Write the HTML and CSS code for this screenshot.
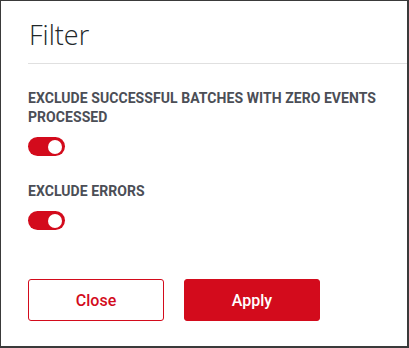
FILE: index.html
```html
<!DOCTYPE html>
<html>

<head>
    <meta charset="utf-8">
    <title>Filter</title>
    <link rel="stylesheet" href="styles.css">
</head>

<body>
    <div class="dialog">
        <header class="dialog-header">
            <h2 class="dialog-title">Filter</h2>
        </header>
        <div class="dialog-body">
            <div class="option">
                <label class="option-label">EXCLUDE SUCCESSFUL BATCHES WITH ZERO EVENTS PROCESSED</label>
                <span class="toggle"><span class="toggle-knob"></span></span>
            </div>
            <div class="option">
                <label class="option-label">EXCLUDE ERRORS</label>
                <span class="toggle"><span class="toggle-knob"></span></span>
            </div>
        </div>
        <footer class="dialog-footer">
            <button class="btn btn-secondary">Close</button>
            <button class="btn btn-primary">Apply</button>
        </footer>
    </div>
</body>

</html>
```

FILE: styles.css
```css
* {
    box-sizing: border-box;
    --red: #d30b1c;
    --text: #21272a;
    --label: #4b4e56;
    --line: #e0e0e0;
}

body {
    margin: 0;
    font-family: 'Roboto', sans-serif;
    background: #fff;
}

.dialog {
    width: 409px;
    height: 348px;
    border: 1px solid #3a3a3a;
    border-right-width: 2px;
    border-bottom-width: 2px;
    padding-left: 27px;
    display: flex;
    flex-direction: column;
}

.dialog-header {
    border-bottom: 1px solid var(--line);
    padding-top: 17px;
    height: 63px;
}

.dialog-title {
    margin: 0;
    font-family: 'Open Sans', sans-serif;
    font-size: 27px;
    font-weight: 300;
    line-height: 34px;
    color: var(--text);
    padding-left: 1px;
}

.dialog-body {
    padding-top: 25px;
    padding-right: 10px;
}

.option {
    display: flex;
    flex-direction: column;
    align-items: flex-start;
    margin-bottom: 26px;
}

.option-label {
    font-size: 14px;
    font-weight: 700;
    line-height: 19px;
    letter-spacing: 0.06px;
    color: var(--label);
    margin-bottom: 10px;
}

.toggle {
    width: 37px;
    height: 19px;
    border-radius: 10px;
    background: var(--red);
    display: flex;
    align-items: center;
    justify-content: flex-end;
    padding-right: 3px;
}

.toggle-knob {
    width: 14px;
    height: 14px;
    border-radius: 50%;
    background: #fff;
}

.dialog-footer {
    display: flex;
    gap: 20px;
    margin-top: 23px;
}

.btn {
    width: 136px;
    height: 42px;
    border-radius: 3px;
    font-family: 'Roboto', sans-serif;
    font-size: 16px;
    font-weight: 500;
    cursor: pointer;
}

.btn-secondary {
    background: #fff;
    color: var(--red);
    border: 1px solid var(--red);
}

.btn-primary {
    background: var(--red);
    color: #fff;
    border: 1px solid var(--red);
}
```
